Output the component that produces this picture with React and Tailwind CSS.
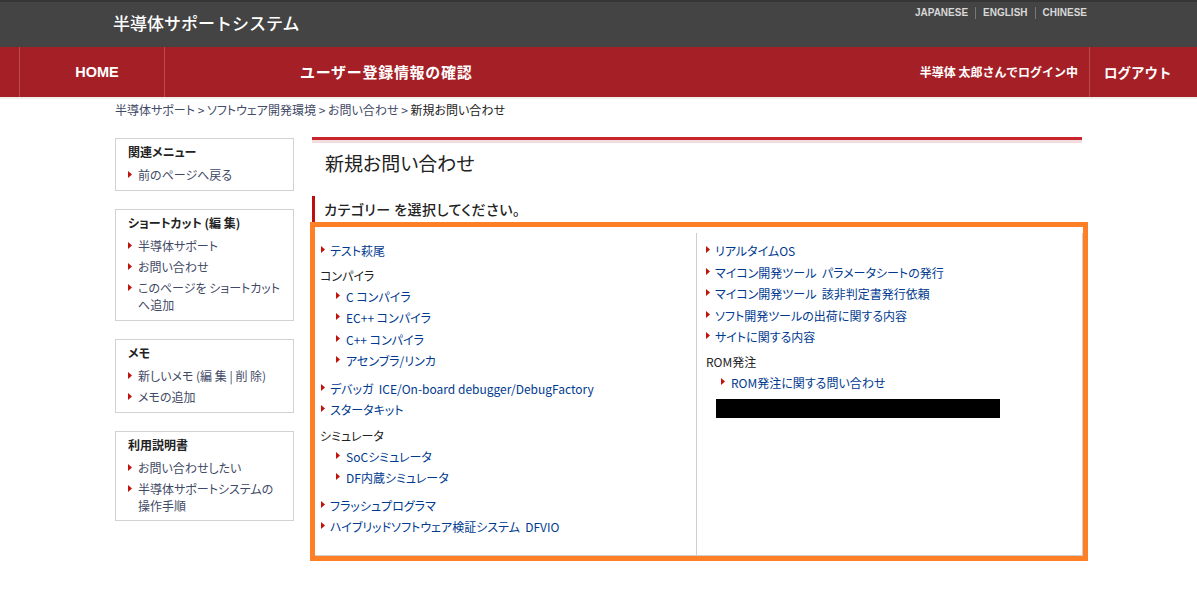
function Arrow({ className }) {
  return (
    <svg width="4" height="7" viewBox="0 0 4 7" className={"shrink-0 " + className}>
      <path d="M0 0 L4 3.5 L0 7 Z" fill="#c1120c" />
    </svg>
  )
}

function SideLink({ children }) {
  return (
    <li className="flex gap-[6px] text-[#3f4a66] leading-[17px] mt-[4px]">
      <Arrow className="mt-[5px]" />
      <span>{children}</span>
    </li>
  )
}

function SideBox({ title, className, children }) {
  return (
    <div className={"border border-[#d2d2d2] pl-[12px] pr-[8px] pt-[3px] " + className}>
      <div className="font-bold text-[#222] leading-[20px]">{title}</div>
      <ul>{children}</ul>
    </div>
  )
}

function CatLink({ children, sub }) {
  return (
    <li className={"flex h-[21.5px] items-start leading-[21px] text-[#003a8f] " + (sub ? "pl-[15px] gap-[6px]" : "gap-[5px]")}>
      <Arrow className="mt-[6px]" />
      <span className="whitespace-pre">{children}</span>
    </li>
  )
}

export default function App() {
  return (
    <div className="min-h-[605px] bg-white text-[12px] [font-feature-settings:'palt'] font-['Noto_Sans_CJK_JP','Liberation_Sans',sans-serif]">
      <div className="h-[47px] bg-[#444444] border-t-2 border-[#383536] flex justify-between">
        <div className="pl-[113px] pt-[11px] text-[17px] leading-[20px] font-medium text-white [font-feature-settings:normal]">半導体サポートシステム</div>
        <div className="pr-[110px] pt-[5px] flex items-start text-[10px] leading-[12px] font-bold text-[#d8d8d8] font-['Liberation_Sans',sans-serif]">
          <span>JAPANESE</span>
          <span className="border-l border-[#777] ml-[7px] pl-[7px]">ENGLISH</span>
          <span className="border-l border-[#777] ml-[7px] pl-[7px]">CHINESE</span>
        </div>
      </div>

      <div className="h-[50px] bg-[#a51f26] flex items-stretch text-white font-bold">
        <div className="w-[19px]"></div>
        <div className="w-[146px] border-x border-[#bb4a50] flex items-center justify-center pl-[10px] pt-[2px] text-[14.5px] font-['Liberation_Sans',sans-serif]">HOME</div>
        <div className="pl-[135px] flex items-center text-[15px] tracking-[0.7px] [font-feature-settings:normal]">ユーザー登録情報の確認</div>
        <div className="ml-auto flex items-center pr-[11px] [font-feature-settings:normal]">半導体 太郎さんでログイン中</div>
        <div className="w-[108px] border-l border-[#bb4a50] flex items-center pl-[14px] text-[13.5px] [font-feature-settings:normal]">ログアウト</div>
      </div>
      <div className="h-[2px] bg-[#f1eeee]"></div>

      <div className="pl-[115px] pt-[1px] h-[38px] leading-[20px] text-[#3f4a66]">
        半導体サポート &gt; ソフトウェア開発環境 &gt; お問い合わせ &gt; <span className="text-[#222]">新規お問い合わせ</span>
      </div>

      <div className="flex pl-[115px]">
        <div className="w-[179px] pt-[1px] flex flex-col gap-[18px]">
          <SideBox title="関連メニュー" className="h-[53px]">
            <SideLink>前のページへ戻る</SideLink>
          </SideBox>
          <SideBox title="ショートカット (編 集)" className="h-[112px]">
            <SideLink>半導体サポート</SideLink>
            <SideLink>お問い合わせ</SideLink>
            <SideLink>このページを ショートカットへ追加</SideLink>
          </SideBox>
          <SideBox title="メモ" className="h-[74px]">
            <SideLink>新しいメモ (編 集 | 削 除)</SideLink>
            <SideLink>メモの追加</SideLink>
          </SideBox>
          <SideBox title="利用説明書" className="h-[90px]">
            <SideLink>お問い合わせしたい</SideLink>
            <SideLink>半導体サポートシステムの操作手順</SideLink>
          </SideBox>
        </div>

        <div className="ml-[18px] w-[770px]">
          <div className="h-[6px] border-t-[3px] border-[#c9252d] bg-[#f3dcdd]"></div>
          <div className="h-[53px] pl-[13px] pt-[7px] text-[19px] leading-[26px] text-[#222]">新規お問い合わせ</div>
          <div className="h-[26px] border-l-[3px] border-[#bd0f0f] pl-[9px] pt-[2px] text-[14px] tracking-[0.5px] leading-[22px] font-medium text-[#222]">カテゴリー を選択してください。</div>

          <div className="-ml-[2px] w-[778px] h-[339px] border-[5px] border-[#ff7f27] pt-[6px]">
            <div className="h-full flex border-r border-b border-[#cfcfcf]">
              <div className="w-[382px] border-r border-[#cfcfcf] pl-[6px] pt-[7px]">
                <ul>
                  <CatLink>テスト萩尾</CatLink>
                </ul>
                <div className="-ml-[1px] leading-[21px] text-[#222] mt-[3px]">コンパイラ</div>
                <ul>
                  <CatLink sub>C コンパイラ</CatLink>
                  <CatLink sub>EC++ コンパイラ</CatLink>
                  <CatLink sub>C++ コンパイラ</CatLink>
                  <CatLink sub>アセンブラ/リンカ</CatLink>
                </ul>
                <ul className="mt-[6px]">
                  <CatLink>デバッガ  ICE/On-board debugger/DebugFactory</CatLink>
                  <CatLink>スタータキット</CatLink>
                </ul>
                <div className="-ml-[1px] leading-[21px] text-[#222] mt-[4px]">シミュレータ</div>
                <ul>
                  <CatLink sub>SoCシミュレータ</CatLink>
                  <CatLink sub>DF内蔵シミュレータ</CatLink>
                </ul>
                <ul className="mt-[6px]">
                  <CatLink>フラッシュプログラマ</CatLink>
                  <CatLink>ハイブリッドソフトウェア検証システム  DFVIO</CatLink>
                </ul>
              </div>
              <div className="flex-1 pl-[9px] pt-[7px]">
                <ul>
                  <CatLink>リアルタイムOS</CatLink>
                  <CatLink>マイコン開発ツール  パラメータシートの発行</CatLink>
                  <CatLink>マイコン開発ツール  該非判定書発行依頼</CatLink>
                  <CatLink>ソフト開発ツールの出荷に関する内容</CatLink>
                  <CatLink>サイトに関する内容</CatLink>
                </ul>
                <div className="leading-[21px] text-[#222] mt-[3px]">ROM発注</div>
                <ul>
                  <CatLink sub>ROM発注に関する問い合わせ</CatLink>
                </ul>
                <div className="ml-[10px] mt-[6px] w-[284px] h-[19px] bg-black"></div>
              </div>
            </div>
          </div>
        </div>
      </div>
    </div>
  )
}
